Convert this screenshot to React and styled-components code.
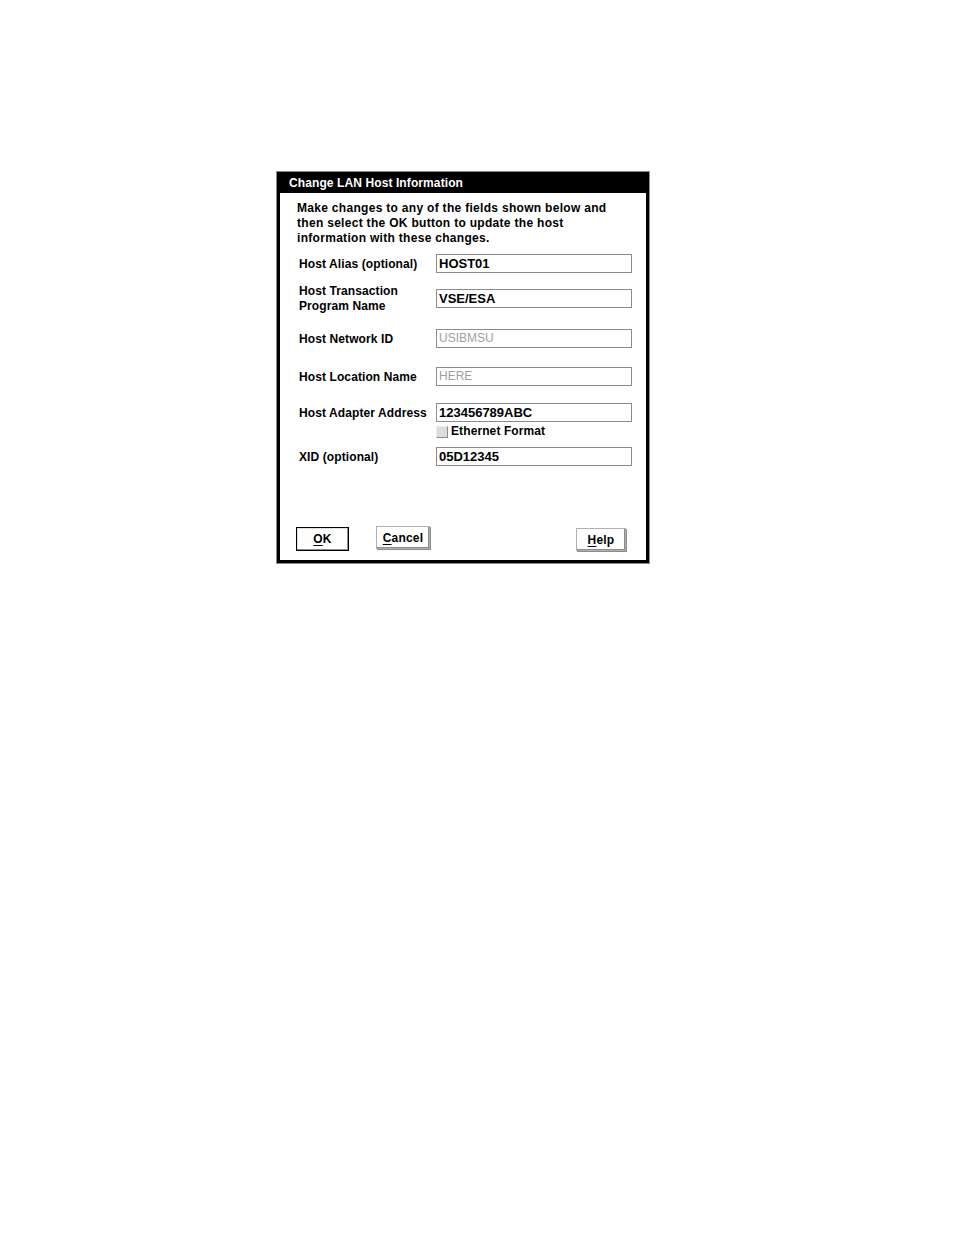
import React from "react";
import styled, { createGlobalStyle } from "styled-components";

const GlobalStyle = createGlobalStyle`
  html, body {
    margin: 0;
    padding: 0;
    background: #ffffff;
  }
  body {
    font-family: "Liberation Sans", Arial, sans-serif;
  }
`;

const Page = styled.div`
  width: 954px;
  height: 1235px;
  padding: 171px 0 0 276px;
  box-sizing: border-box;
`;

const Dialog = styled.div`
  width: 374px;
  height: 393px;
  box-sizing: border-box;
  border: 1px solid #8c8c8c;
  display: flex;
`;

const Frame = styled.div`
  flex: 1;
  border: 3px solid #000;
  display: flex;
  flex-direction: column;
  background: #fff;
`;

const TitleBar = styled.div`
  height: 18px;
  background: #000;
  color: #fff;
  font-size: 12px;
  font-weight: bold;
  line-height: 17px;
  padding-left: 9px;
  letter-spacing: 0.1px;
`;

const Body = styled.div`
  flex: 1;
  display: flex;
  flex-direction: column;
  padding: 8px 14px 0 17px;
  font-size: 12px;
  font-weight: bold;
  color: #000;
`;

const Intro = styled.p`
  margin: 0;
  line-height: 15px;
  letter-spacing: 0.3px;
`;

const Row = styled.div`
  display: grid;
  grid-template-columns: 137px 196px;
  align-items: center;
  margin-top: ${(p) => p.$gap}px;
  padding-left: 2px;
`;

const Label = styled.div`
  line-height: 15px;
  letter-spacing: 0.1px;
  padding-top: 1px;
`;

const Field = styled.div`
  height: 19px;
  box-sizing: border-box;
  border: 1px solid #8c8c8c;
  padding-left: 2px;
  font-size: ${(p) => (p.$disabled ? 12 : 13)}px;
  line-height: 17px;
  color: ${(p) => (p.$disabled ? "#a0a0a0" : "#000")};
  font-weight: ${(p) => (p.$disabled ? "normal" : "bold")};
  white-space: nowrap;
`;

const CheckRow = styled.div`
  display: flex;
  align-items: center;
  margin-left: 139px;
  margin-top: 2px;
  gap: 3px;
`;

const Box = styled.span`
  width: 12px;
  height: 12px;
  box-sizing: border-box;
  background: #dcdcdc;
  border: 1px solid #ececec;
  border-right-color: #8c8c8c;
  border-bottom-color: #8c8c8c;
`;

const CheckLabel = styled.span`
  font-size: 12px;
  letter-spacing: 0.1px;
  line-height: 15px;
`;

const Buttons = styled.div`
  margin: auto 0 9px -1px;
  display: flex;
  align-items: flex-start;
  padding-right: 6px;
`;

const Button = styled.button`
  font-family: "Liberation Sans", Arial, sans-serif;
  font-size: 12px;
  font-weight: bold;
  color: #000;
  background: #fff;
  height: ${(p) => (p.$default ? 24 : 23)}px;
  width: ${(p) => p.$w}px;
  margin-left: ${(p) => p.$ml || 0}px;
  margin-top: ${(p) => p.$mt || 0}px;
  padding: 0;
  box-sizing: border-box;
  border: ${(p) => (p.$default ? "1px solid #000" : "1px solid #b0b0b0")};
  box-shadow: ${(p) =>
    p.$default
      ? "inset -1px -1px 0 #8c8c8c, inset 1px 1px 0 #e0e0e0"
      : "inset -1px -1px 0 #8c8c8c, 1px 1px 0 #8c8c8c"};
  letter-spacing: 0.2px;
  cursor: pointer;

  u {
    text-decoration: underline;
    text-underline-offset: 2px;
  }
`;

const Spacer = styled.div`
  flex: 1;
`;

const fields = [
  { label: "Host Alias (optional)", value: "HOST01", gap: 8 },
  { label: ["Host Transaction", "Program Name"], value: "VSE/ESA", gap: 10 },
  { label: "Host Network ID", value: "USIBMSU", gap: 15, disabled: true },
  { label: "Host Location Name", value: "HERE", gap: 19, disabled: true },
  { label: "Host Adapter Address", value: "123456789ABC", gap: 17 },
];

export default function App() {
  return (
    <Page>
      <GlobalStyle />
      <Dialog>
        <Frame>
          <TitleBar>Change LAN Host Information</TitleBar>
          <Body>
            <Intro>
              Make changes to any of the fields shown below and
              <br />
              then select the OK button to update the host
              <br />
              information with these changes.
            </Intro>
            {fields.map((f) => (
              <Row key={f.value} $gap={f.gap}>
                <Label>
                  {Array.isArray(f.label)
                    ? f.label.map((l) => <div key={l}>{l}</div>)
                    : f.label}
                </Label>
                <Field $disabled={f.disabled}>{f.value}</Field>
              </Row>
            ))}
            <CheckRow>
              <Box />
              <CheckLabel>Ethernet Format</CheckLabel>
            </CheckRow>
            <Row $gap={8}>
              <Label>XID (optional)</Label>
              <Field>05D12345</Field>
            </Row>
            <Buttons>
              <Button $default $w={53} $mt={1}>
                <u>O</u>K
              </Button>
              <Button $w={54} $ml={27}>
                <u>C</u>ancel
              </Button>
              <Spacer />
              <Button $w={50} $mt={2}>
                <u>H</u>elp
              </Button>
            </Buttons>
          </Body>
        </Frame>
      </Dialog>
    </Page>
  );
}
